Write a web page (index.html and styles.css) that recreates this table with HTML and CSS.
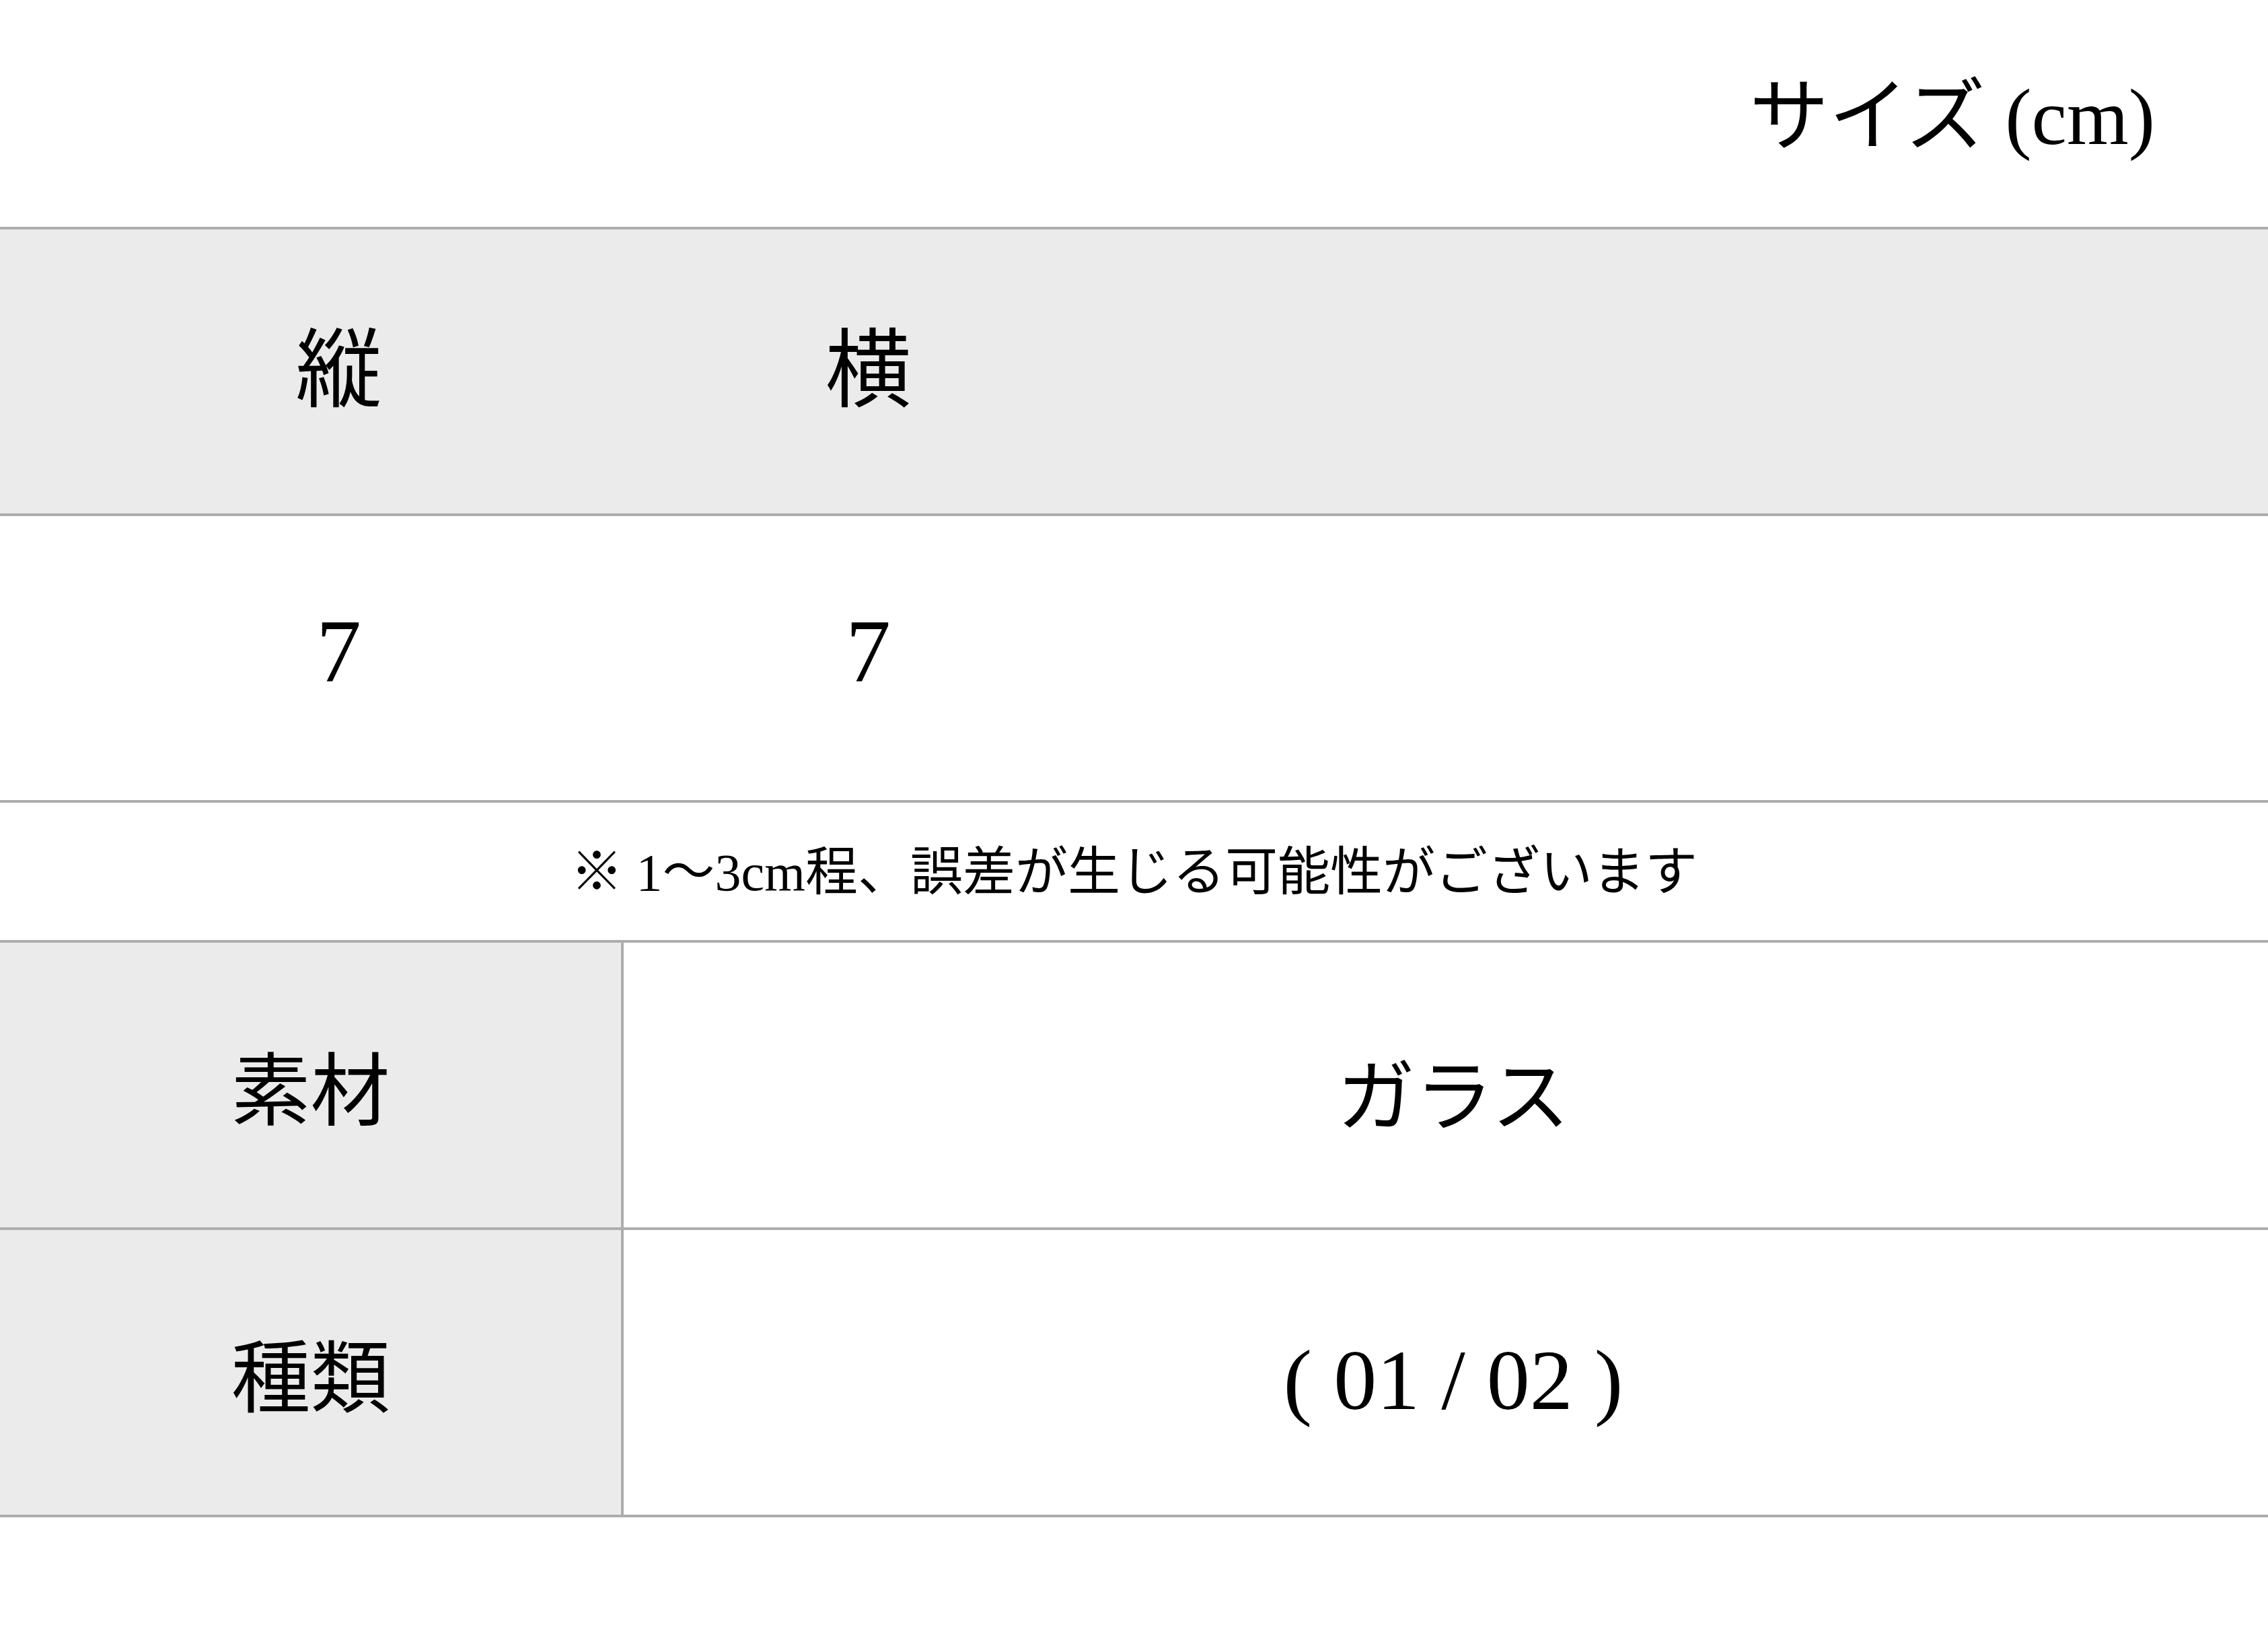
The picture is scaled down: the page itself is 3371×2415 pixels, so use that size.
FILE: index.html
```html
<!DOCTYPE html>
<html lang="ja">
<head>
<meta charset="utf-8">
<link rel="stylesheet" href="styles.css">
</head>
<body>
<div class="page">
  <div class="title-bar">
    <div class="title">サイズ (cm)</div>
  </div>
  <div class="size-table">
    <div class="size-row head">
      <div class="size-cell">縦</div>
      <div class="size-cell">横</div>
    </div>
    <div class="size-row data">
      <div class="size-cell num">7</div>
      <div class="size-cell num">7</div>
    </div>
    <div class="note">※ 1〜3cm程、誤差が生じる可能性がございます</div>
    <div class="spec-row">
      <div class="spec-label">素材</div>
      <div class="spec-value kana">ガラス</div>
    </div>
    <div class="spec-row">
      <div class="spec-label">種類</div>
      <div class="spec-value latin">( 01 / 02 )</div>
    </div>
  </div>
</div>
</body>
</html>
```

FILE: styles.css
```css
html, body {
  margin: 0;
  padding: 0;
  background: #ffffff;
}

.page {
  width: 3371px;
  height: 2415px;
  font-family: "Liberation Serif", "Noto Sans CJK JP", serif;
  color: #000;
  overflow: hidden;
}

.title-bar {
  height: 337px;
  display: flex;
  align-items: center;
  justify-content: flex-end;
  padding-right: 168px;
  box-sizing: border-box;
}

.title {
  font-size: 118px;
  line-height: 1;
  padding-top: 12px;
}

.size-table {
  border-top: 4px solid #adadad;
}

.size-row {
  height: 422px;
  display: grid;
  grid-template-columns: 787px 787px;
  padding-left: 110px;
  align-items: center;
  border-bottom: 4px solid #adadad;
}

.size-row.head {
  background: #ebebeb;
}

.size-cell {
  text-align: center;
  font-size: 128px;
  line-height: 1;
}

.size-cell.num {
  font-size: 134px;
  padding-bottom: 20px;
}

.note {
  height: 200px;
  padding-top: 4px;
  display: flex;
  align-items: center;
  justify-content: center;
  font-size: 78px;
  line-height: 1;
  border-bottom: 4px solid #adadad;
}

.spec-row {
  height: 423px;
  display: grid;
  grid-template-columns: 927px 1fr;
  border-bottom: 4px solid #adadad;
}

.spec-label {
  background: #ebebeb;
  border-right: 4px solid #adadad;
  display: flex;
  align-items: center;
  justify-content: center;
  font-size: 118px;
  line-height: 1;
  padding-top: 22px;
}

.spec-value {
  display: flex;
  align-items: center;
  justify-content: center;
  font-size: 116px;
  line-height: 1;
  padding-left: 22px;
}

.spec-value.kana {
  padding-top: 38px;
}

.spec-value.latin {
  font-size: 128px;
  padding-top: 22px;
}
```
